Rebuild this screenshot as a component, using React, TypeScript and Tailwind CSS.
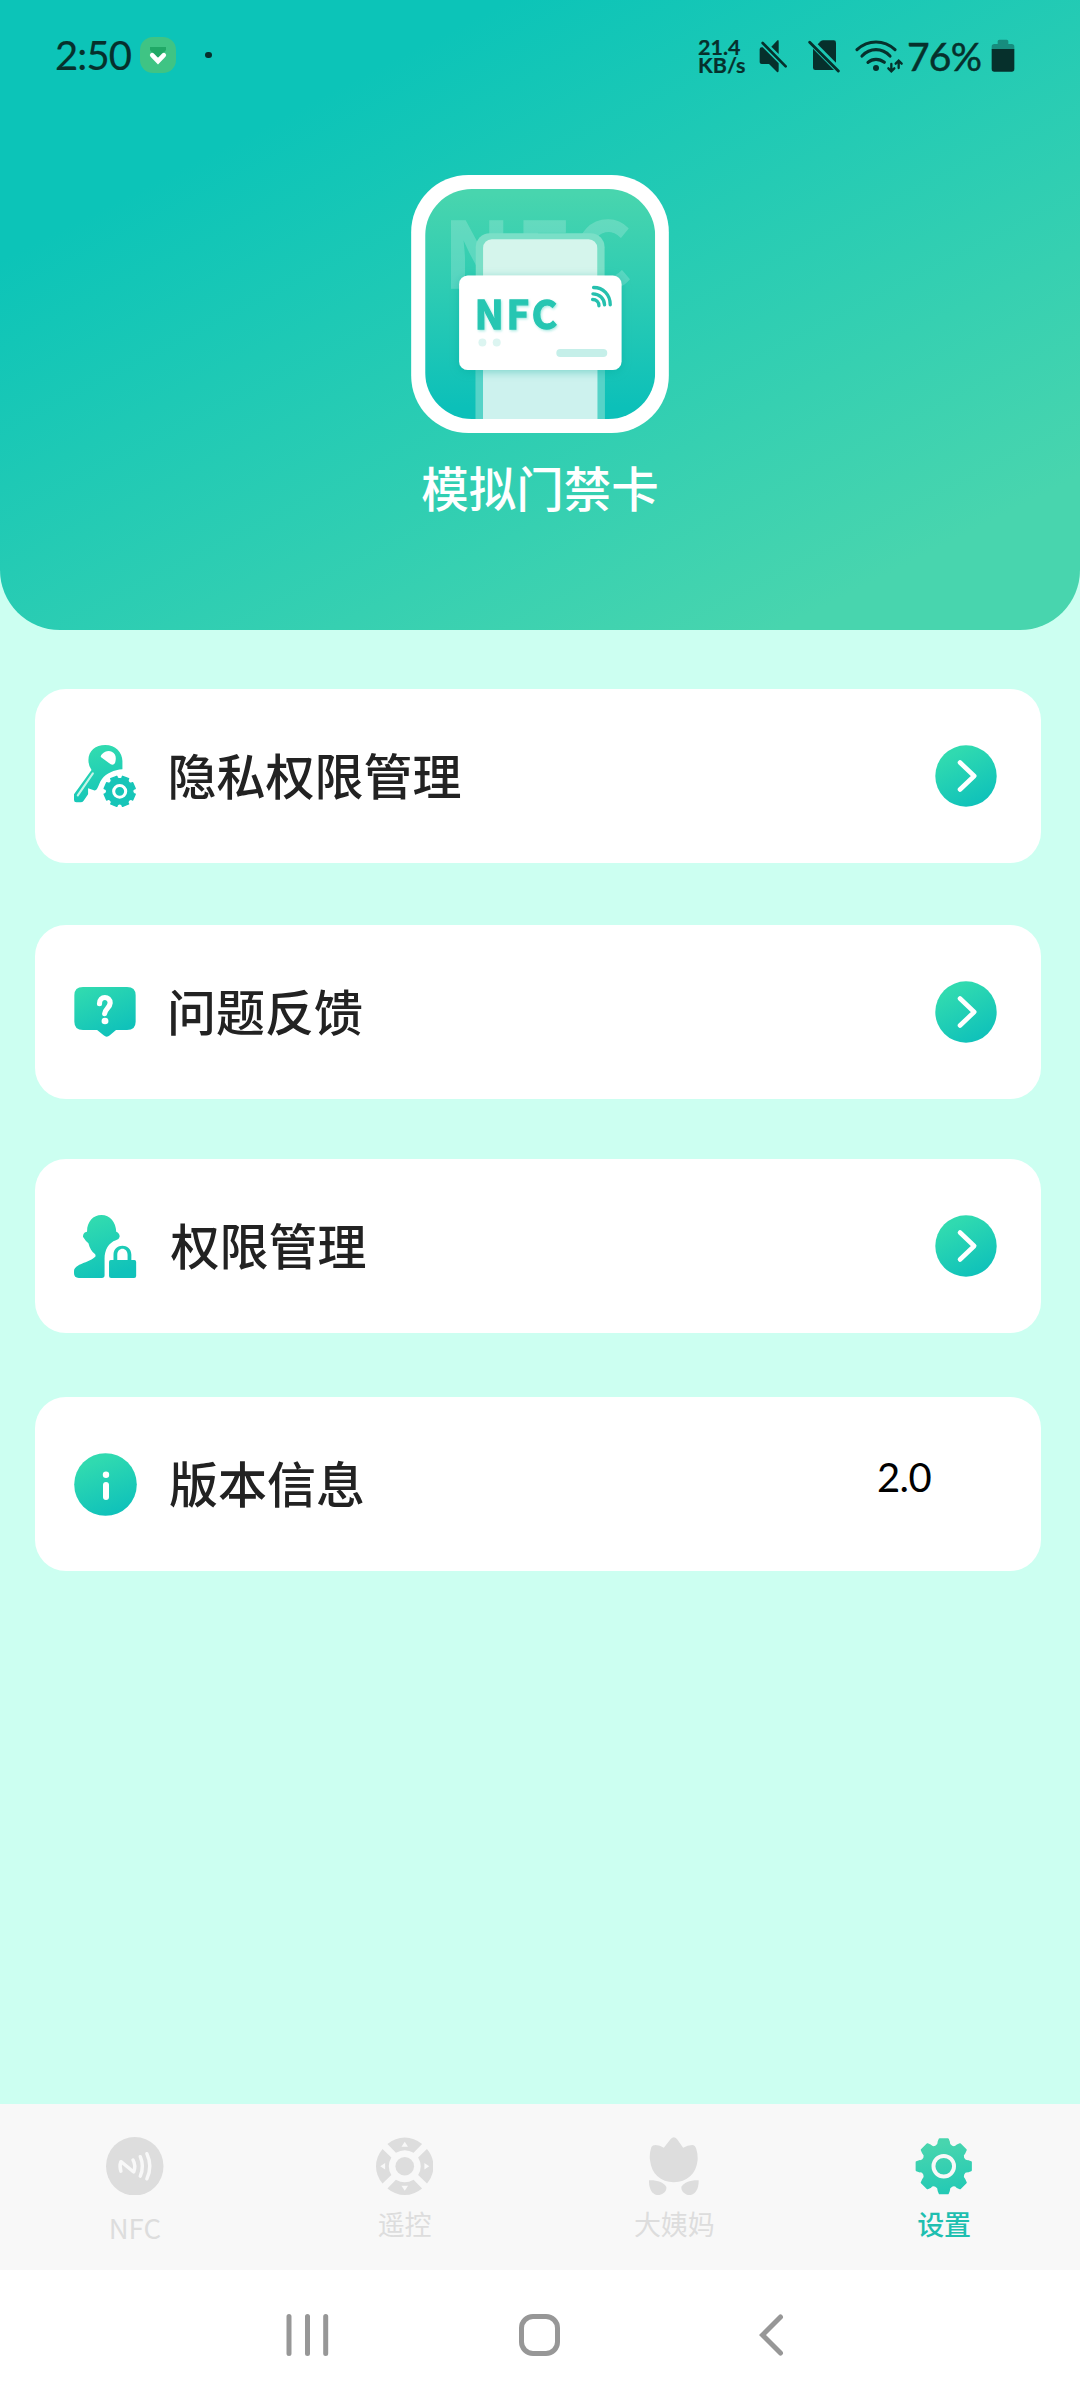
import type { ReactNode } from 'react'

const CJK = "font-['Noto_Sans_CJK_SC','Noto_Sans',sans-serif]"
const LATIN = "font-['Lato','Noto_Sans',sans-serif]"

// Eight-tooth gear outline around the origin, first tooth at `offset` degrees
function gearPath(tip: number, base: number, tipHalf: number, baseHalf: number, notch: number, offset = 0) {
  const point = (radius: number, degrees: number) => {
    const a = ((degrees + offset - 90) * Math.PI) / 180
    return `${(radius * Math.cos(a)).toFixed(2)} ${(radius * Math.sin(a)).toFixed(2)}`
  }
  let d = ''
  for (let i = 0; i < 8; i++) {
    const mid = i * 45
    d += i === 0 ? `M${point(base, mid - baseHalf)}` : `A${notch} ${notch} 0 0 0 ${point(base, mid - baseHalf)}`
    d += `L${point(tip, mid - tipHalf)}L${point(tip, mid + tipHalf)}L${point(base, mid + baseHalf)}`
  }
  return `${d}A${notch} ${notch} 0 0 0 ${point(base, -baseHalf)}Z`
}

function BrandGradient({ id, box }: { id: string; box: [number, number, number, number] }) {
  const [x1, y1, x2, y2] = box
  return (
    <defs>
      <linearGradient id={id} gradientUnits="userSpaceOnUse" x1={x1} y1={y1} x2={x2} y2={y2}>
        <stop offset="0.1" stopColor="#30dab0" />
        <stop offset="0.95" stopColor="#10c2ba" />
      </linearGradient>
    </defs>
  )
}

function StatusBar() {
  return (
    <div className={`flex h-[110px] items-center text-[#06302c] ${LATIN}`}>
      <span className="ml-[55px] w-[85px] text-[40px] leading-none tracking-[-0.9px] [-webkit-text-stroke:0.2px]">
        2:50
      </span>
      <svg className="h-9 w-9" viewBox="0 0 36 36">
        <rect width="36" height="36" rx="13" fill="#3fc484" />
        <path d="M10 10h16v3l-6 7h-4l-6-7z" fill="#20a866" />
        <path d="M12.2 18.2l5.8 6 5.8-6" fill="none" stroke="#fff" strokeWidth="4.6" strokeLinecap="round" />
      </svg>
      <span className="ml-[29px] h-[6.5px] w-[6.5px] rounded-full bg-[#06302c]" />

      <div className="ml-auto flex items-center pt-0.5">
        <div className="w-[61px] text-[21.5px] leading-[18.5px] font-bold [-webkit-text-stroke:0.2px]">
          <div>21.4</div>
          <div>KB/s</div>
        </div>
        <svg className="h-[34px] w-[28px]" viewBox="298 117 84 102" fill="currentColor">
          <path d="M306 142Q300 142 300 148V187Q300 192 306 192H328L352 216Q357 219 357 211V190L309 142Z" />
          <path d="M335 140L352 122Q357 117 357 125V162Z" />
          <path d="M309 129L378 199" stroke="currentColor" strokeWidth="8" strokeLinecap="round" />
        </svg>
        <svg className="ml-[21px] h-[34px] w-[32px]" viewBox="444 117 96 102" fill="currentColor">
          <path d="M459 146V203Q459 210 466 210H522Z" />
          <path d="M473 133L482 124Q485 121 490 121H521Q528 121 528 128V188Z" />
          <path d="M449 127L535 213" stroke="currentColor" strokeWidth="8.5" strokeLinecap="round" />
        </svg>
        <svg
          className="ml-[14px] h-[34px] w-[50px]"
          viewBox="582 117 150 102"
          fill="none"
          stroke="currentColor"
          strokeWidth="9.5"
          strokeLinecap="round"
        >
          <path d="M591 149Q616 126 648 126T705 149M606 168Q624 149 648 149T690 168M624 187Q634 178 648 178T673 187" />
          <circle cx="648" cy="204" r="9" fill="currentColor" stroke="none" />
          <path d="M694 192V213M685 205L694 214L703 205M716 204V183M707 191L716 182L725 191" strokeWidth="7" />
        </svg>
        <span className="ml-[3px] w-[84px] text-[39px] leading-none tracking-[-0.8px] [-webkit-text-stroke:0.5px]">
          76%
        </span>
        <svg className="mr-[65px] h-[34px] w-[24px]" viewBox="991 117 72 102" fill="currentColor">
          <path
            d="M993 148V140Q993 132 1001 132H1011V124Q1011 119 1016 119H1038Q1043 119 1043 124V132H1053Q1061 132 1061 140V148Z"
            opacity="0.4"
          />
          <path d="M993 147H1061V207Q1061 215 1053 215H1001Q993 215 993 207Z" />
        </svg>
      </div>
    </div>
  )
}

function AppLogo() {
  return (
    <svg className="h-[258px] w-[258px]" viewBox="63 44 774 775">
      <defs>
        <linearGradient id="logo-bg" x1="0" y1="0" x2="0" y2="1">
          <stop offset="0.02" stopColor="#48d5ae" />
          <stop offset="0.95" stopColor="#0cc0b9" />
        </linearGradient>
        <clipPath id="logo-clip">
          <rect x="105" y="86" width="691" height="691" rx="140" />
        </clipPath>
        <filter id="card-shadow" x="-20%" y="-20%" width="140%" height="150%">
          <feDropShadow dx="0" dy="6" stdDeviation="14" floodColor="#0aa597" floodOpacity="0.4" />
        </filter>
        <filter id="text-shadow" x="-20%" y="-20%" width="140%" height="150%">
          <feDropShadow dx="3" dy="4" stdDeviation="3" floodColor="#29c9b5" floodOpacity="0.4" />
        </filter>
      </defs>
      <rect x="63" y="44" width="774" height="775" rx="172" fill="#fff" />
      <g clipPath="url(#logo-clip)">
        <rect x="105" y="86" width="691" height="691" fill="url(#logo-bg)" />
        <text
          className={CJK}
          x="160"
          y="383"
          fontSize="270"
          fontWeight="700"
          fill="#fff"
          stroke="#fff"
          strokeWidth="4"
          opacity="0.19"
          textLength="565"
        >
          NFC
        </text>
        <rect x="257" y="219" width="387" height="620" rx="42" fill="#7adfc7" />
        <rect x="257" y="480" width="387" height="360" fill="#56d3c8" />
        <rect x="279" y="237" width="343" height="600" rx="26" fill="#d5f5ec" />
        <rect x="279" y="480" width="343" height="360" fill="#cdf2ee" />
        <rect x="207" y="346" width="488" height="284" rx="26" fill="#fff" filter="url(#card-shadow)" />
      </g>
      <text
        className={CJK}
        x="254"
        y="507"
        fontSize="116"
        fontWeight="700"
        fill="#26c6b2"
        stroke="#26c6b2"
        strokeWidth="4"
        textLength="247"
        filter="url(#text-shadow)"
      >
        NFC
      </text>
      <circle cx="277" cy="547" r="12" fill="#dcf5f1" />
      <circle cx="320" cy="547" r="12" fill="#dcf5f1" />
      <rect x="499" y="567" width="153" height="24" rx="12" fill="#c5efe9" />
      <path
        d="M611 382C640 382 661 404 661 434M609 401C629 401 643 415 644 434M608 418C619 418 627 426 627 437"
        fill="none"
        stroke="#26c0ae"
        strokeWidth="10"
        strokeLinecap="round"
      />
    </svg>
  )
}

function KeyGearIcon() {
  return (
    <svg className="h-[63px] w-[62.5px]" viewBox="215 615 182 189" preserveAspectRatio="none">
      <BrandGradient id="key-fill" box={[270, 610, 330, 810]} />
      <path
        d="M257 660C257 632 278 615 306 615C336 615 356 638 356 663V688C332 690 309 700 297 716C289 727 288 735 283 745Q280 753 273 751L256 745V763L243 782Q240 787 234 787H222Q215 787 215 780V763L266 690Q257 678 257 660Z"
        fill="url(#key-fill)"
      />
      <g transform="translate(348 754)">
        <path
          d={gearPath(46, 42, 12, 13, 8.5, 22.5)}
          fill="#17c5b8"
          stroke="#17c5b8"
          strokeWidth="4"
          strokeLinejoin="round"
        />
        <circle r="17.5" fill="none" stroke="#fff" strokeWidth="9" />
      </g>
      <path d="M293 651Q292 646 297 642C305 634 315 631 325 635C336 640 338 651 336 662C335 672 329 677 322 673Z" fill="#fff" />
      <path d="M270 700L226 766" stroke="#c4f5e8" strokeWidth="6" strokeLinecap="round" />
    </svg>
  )
}

function QuestionIcon() {
  return (
    <svg className="h-[50px] w-[62px]" viewBox="216 264 180 150" preserveAspectRatio="none">
      <BrandGradient id="question-fill" box={[260, 240, 340, 410]} />
      <path
        d="M242 264H370Q395 264 395 289V368Q395 393 370 393H338L320 409Q311 417 302 409L283 393H242Q217 393 217 368V289Q217 264 242 264Z"
        fill="url(#question-fill)"
      />
      <path
        d="M290 314C290 289 321 290 321 312C320 327 306 329 305 344"
        fill="none"
        stroke="#fff"
        strokeWidth="15"
        strokeLinecap="round"
      />
      <circle cx="306" cy="366" r="10" fill="#fff" />
    </svg>
  )
}

function UserLockIcon() {
  return (
    <svg className="h-[63px] w-[62.5px]" viewBox="215 225 182 189" preserveAspectRatio="none">
      <BrandGradient id="user-fill" box={[265, 225, 335, 415]} />
      <g fill="url(#user-fill)">
        <path d="M253 274C253 245 271 225 295 225C320 225 337 247 338 275Q348 279 348 290Q346 299 337 301C316 308 304 330 304 356V406Q304 414 296 414H229Q215 414 215 400V393C218 371 257 369 275 352Q280 348 276 342C266 335 261 325 257 310Q249 303 241 290Q242 278 250 276Q253 277 253 274Z" />
        <path d="M322 360H330V344C330 308 382 308 382 344V360H391Q396 360 396 366V408Q396 414 390 414H323Q317 414 317 408V366Q317 360 322 360ZM341 360H371V345C371 320 341 320 341 345Z" />
      </g>
    </svg>
  )
}

function InfoIcon() {
  return (
    <svg className="h-[63px] w-[63px]" viewBox="0 0 63 63">
      <BrandGradient id="info-fill" box={[19, 2, 43, 62]} />
      <circle cx="31.5" cy="31.5" r="31.3" fill="url(#info-fill)" />
      <circle cx="32" cy="21.8" r="3.2" fill="#fff" />
      <path d="M32 32V44" stroke="#fff" strokeWidth="6" strokeLinecap="round" />
    </svg>
  )
}

function ArrowIcon() {
  return (
    <svg className="h-[62px] w-[62px]" viewBox="0 0 62 62">
      <BrandGradient id="arrow-fill" box={[16, 2, 46, 60]} />
      <circle cx="31" cy="31" r="30.7" fill="url(#arrow-fill)" />
      <path d="M25 17.5L39.2 31L25 44.5" fill="none" stroke="#fff" strokeWidth="4.6" strokeLinecap="round" strokeLinejoin="round" />
    </svg>
  )
}

function NfcIcon() {
  return (
    <svg className="h-[58.5px] w-[57.5px]" viewBox="307 170 166 176" preserveAspectRatio="none">
      <ellipse cx="390" cy="258" rx="83" ry="88" fill="#ddd" />
      <g fill="none" stroke="#f8f8f8" strokeWidth="10" strokeLinecap="round" strokeLinejoin="round">
        <path d="M350 273Q345 258 350 244L387 275Q394 256 385 239" />
        <path d="M406 229Q418 258 406 288M425 220Q442 258 425 296" />
      </g>
    </svg>
  )
}

function RemoteIcon() {
  return (
    <svg className="h-[58.5px] w-[57.5px]" viewBox="-88 -88 176 176">
      {[0, 90, 180, 270].map((angle) => (
        <g key={angle} transform={`rotate(${angle})`}>
          <path d="M-53 -68Q-29 -88 0 -88T53 -68L27 -41Q0 -57 -27 -41Z" fill="#ddd" />
          <path d="M0 -75L10 -60H-10Z" fill="#f8f8f8" />
        </g>
      ))}
      <circle r="28.5" fill="#ddd" />
    </svg>
  )
}

function TulipIcon() {
  return (
    <svg className="h-[58.5px] w-[50px]" viewBox="318 170 145 176" preserveAspectRatio="none" fill="#ddd">
      <path d="M361 202L381 176Q390 165 399 176L417 202Q430 194 443 194Q452 195 455 205Q460 222 459 240C455 281 428 306 390 306C352 306 325 281 321 240Q318 222 325 200Q328 194 337 194Q350 195 361 202Z" />
      <path d="M318 300C342 299 362 307 368 320C371 333 357 345 344 345C327 344 317 325 318 300Z" />
      <path d="M462 300C438 299 418 307 412 320C410 333 424 345 436 345C453 344 463 325 462 300Z" />
    </svg>
  )
}

function SettingsIcon() {
  return (
    <svg className="h-[58.5px] w-[57.5px]" viewBox="-88 -88 176 176">
      <defs>
        <linearGradient id="settings-fill" gradientUnits="userSpaceOnUse" x1="-15" y1="-88" x2="15" y2="88">
          <stop offset="0.1" stopColor="#48d5ae" />
          <stop offset="1" stopColor="#22c9b5" />
        </linearGradient>
      </defs>
      <path
        d={gearPath(84, 76, 8.5, 12, 14.5)}
        fill="url(#settings-fill)"
        stroke="url(#settings-fill)"
        strokeWidth="6"
        strokeLinejoin="round"
      />
      <circle r="31.5" fill="none" stroke="#f8f8f8" strokeWidth="12" />
    </svg>
  )
}

type Row = { label: string; icon: ReactNode; spacing: string; labelSpacing: string; value?: string }

const rows: Row[] = [
  { label: '隐私权限管理', icon: <KeyGearIcon />, spacing: 'mt-[59px]', labelSpacing: 'ml-[31px]' },
  { label: '问题反馈', icon: <QuestionIcon />, spacing: 'mt-[62px]', labelSpacing: 'ml-[31px]' },
  { label: '权限管理', icon: <UserLockIcon />, spacing: 'mt-[60px]', labelSpacing: 'ml-[34px]' },
  { label: '版本信息', icon: <InfoIcon />, spacing: 'mt-[64px]', labelSpacing: 'ml-[32px]', value: '2.0' },
]

const tabs = [
  { label: 'NFC', icon: <NfcIcon />, style: 'text-[#ddd]', labelStyle: 'mt-[12px] text-[27.5px]' },
  { label: '遥控', icon: <RemoteIcon />, style: 'text-[#ddd]', labelStyle: 'mt-[9px] text-[27px]' },
  { label: '大姨妈', icon: <TulipIcon />, style: 'text-[#ddd]', labelStyle: 'mt-[9px] text-[27px]' },
  { label: '设置', icon: <SettingsIcon />, style: 'text-[#1fbfb0]', labelStyle: 'mt-[9px] text-[27px] font-medium' },
]

export default function App() {
  return (
    <div className={`flex h-[2400px] w-[1080px] flex-col overflow-hidden bg-[#ccfff1] ${CJK}`}>
      <header className="h-[630px] rounded-b-[60px] bg-[linear-gradient(153deg,#0cc4b8_22%,#48d5ae_87%)]">
        <StatusBar />
        <div className="flex flex-col items-center pt-[65px]">
          <AppLogo />
          <h1 className="mt-[18.5px] text-[47.5px] leading-[70px] font-medium text-white">模拟门禁卡</h1>
        </div>
      </header>

      <main className="flex-1">
        {rows.map((row) => (
          <div
            key={row.label}
            className={`ml-[34.5px] flex h-[174px] w-[1006.5px] items-center rounded-[31px] bg-white pr-[44px] pl-[39.5px] ${row.spacing}`}
          >
            {row.icon}
            <span className={`mb-[5px] text-[49px] leading-[72px] font-medium text-[#222] ${row.labelSpacing}`}>
              {row.label}
            </span>
            {row.value ? (
              <span className={`mr-[66px] mb-[14px] ml-auto text-[40px] leading-none tracking-[-0.6px] text-black ${LATIN}`}>
                {row.value}
              </span>
            ) : (
              <span className="ml-auto">
                <ArrowIcon />
              </span>
            )}
          </div>
        ))}
      </main>

      <nav className="grid h-[166px] grid-cols-4 bg-[#f8f8f8] pr-px">
        {tabs.map((tab) => (
          <div key={tab.label} className={`flex flex-col items-center pt-[32.5px] ${tab.style}`}>
            {tab.icon}
            <span className={`leading-[40px] ${tab.labelStyle}`}>{tab.label}</span>
          </div>
        ))}
      </nav>

      <div className="flex h-[130px] items-center bg-white pl-[286px] text-[#979797]">
        <svg className="h-[42px] w-[43px]" viewBox="0 0 43 42" stroke="currentColor" strokeWidth="5" strokeLinecap="round">
          <path d="M3 2.5V39.5M21.5 2.5V39.5M39.7 2.5V39.5" />
        </svg>
        <div className="ml-[190px] h-[42px] w-[41px] rounded-[14px] border-[5px] border-current" />
        <svg className="ml-[199px] h-[42px] w-[25px]" viewBox="0 0 25 42" fill="none" stroke="currentColor" strokeWidth="5" strokeLinecap="round">
          <path d="M21.5 3L3.5 21L21.5 39" />
        </svg>
      </div>
    </div>
  )
}
